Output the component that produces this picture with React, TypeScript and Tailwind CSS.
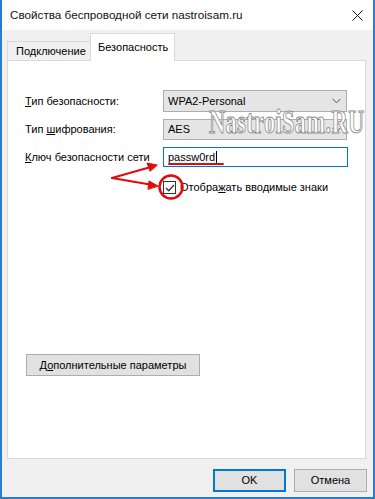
import React from 'react';

function Chevron() {
    return (
        <svg width="9" height="6" viewBox="0 0 9 6" className="text-[#555]">
            <path d="M0.5 0.8 L4.5 4.8 L8.5 0.8" fill="none" stroke="currentColor" strokeWidth="1" />
        </svg>
    );
}

function Combo(props: { value: string; h: string }) {
    return (
        <div className={`w-[184px] ${props.h} bg-[#e5e5e5] border border-[#adadad] flex items-center justify-between pl-[4px] pr-[5px]`}>
            <span>{props.value}</span>
            <Chevron />
        </div>
    );
}

function Row(props: { label: React.ReactNode; children: React.ReactNode; className?: string }) {
    return (
        <div className={`flex items-center ${props.className || ''}`}>
            <div className="w-[138px] whitespace-nowrap">{props.label}</div>
            {props.children}
        </div>
    );
}

function Annotations() {
    return (
        <svg className="absolute left-0 top-0 pointer-events-none" width="375" height="499" viewBox="0 0 375 499">
            <g stroke="#e10b0b" fill="#e10b0b" strokeLinecap="round">
                <line x1="94" y1="56" x2="172" y2="56" strokeWidth="2" />
                <line x1="167" y1="164" x2="221" y2="164" strokeWidth="2" />
                <line x1="110" y1="178" x2="147" y2="167.5" strokeWidth="2" />
                <polygon points="155,165 145,163 148,171" strokeWidth="1" />
                <line x1="110" y1="178" x2="148" y2="184.5" strokeWidth="2" />
                <polygon points="156,186 147,181 146,189" strokeWidth="1" />
                <circle cx="169" cy="187" r="11.5" fill="none" strokeWidth="2.5" />
            </g>
        </svg>
    );
}

export default function App() {
    return (
        <div className="relative w-[375px] h-[499px] flex flex-col bg-[#f0f0f0] border-x-2 border-b-2 border-[#2b7bd0] font-['Liberation_Sans',Arial,sans-serif] text-[11px] leading-none text-black">
            <div className="h-[30px] shrink-0 bg-white flex items-center justify-between pl-[8px] pr-[10px]">
                <span className="text-[11.7px] text-[#111]">Свойства беспроводной сети nastroisam.ru</span>
                <svg width="11" height="11" viewBox="0 0 11 11">
                    <path d="M0.5 0.5 L10.5 10.5 M10.5 0.5 L0.5 10.5" stroke="#111" strokeWidth="1" />
                </svg>
            </div>

            <div className="flex-1 flex flex-col pl-[5px] pr-[7px]">
                <div className="h-[30px] flex items-end">
                    <div className="h-[19px] w-[83px] border-t border-l border-[#d9d9d9] bg-[#f0f0f0] flex items-center pl-[8px]">
                        Подключение
                    </div>
                    <div className="relative z-10 -mb-px h-[28px] w-[85px] bg-white border border-b-0 border-[#d9d9d9] flex items-center pl-[7px]">
                        Безопасность
                    </div>
                </div>

                <div className="h-[399px] bg-white border border-[#d9d9d9] pl-[17px] pt-[29px] flex flex-col">
                    <Row label={<span><u>Т</u>ип безопасности:</span>}>
                        <Combo value="WPA2-Personal" h="h-[22px]" />
                    </Row>
                    <Row className="mt-[7px]" label={<span>Тип <u>ш</u>ифрования:</span>}>
                        <Combo value="AES" h="h-[21px]" />
                    </Row>
                    <Row className="mt-[7px]" label={<span><u>К</u>люч безопасности сети</span>}>
                        <div className="w-[185px] h-[20px] bg-white border border-[#0078d7] flex items-center pl-[4px]">
                            <span>passw0rd</span>
                            <span className="ml-[1px] w-px h-[13px] bg-black" />
                        </div>
                    </Row>
                    <div className="mt-[14px] ml-[138px] flex items-center h-[13px]">
                        <div className="w-[13px] h-[13px] border border-[#333] bg-white flex items-center justify-center">
                            <svg width="10" height="8" viewBox="0 0 10 8">
                                <path d="M1 4 L3.8 6.8 L9 1" fill="none" stroke="#333" strokeWidth="1.3" />
                            </svg>
                        </div>
                        <span className="ml-[4px]">Отобра<u>ж</u>ать вводимые знаки</span>
                    </div>
                    <div className="mt-[160px] ml-[1px] w-[174px] h-[22px] bg-[#e1e1e1] border border-[#adadad] flex items-center justify-center">
                        <span>Д<u>о</u>полнительные параметры</span>
                    </div>
                </div>

                <div className="mt-[10px] flex justify-end gap-[8px] -mr-[1px]">
                    <div className="w-[73px] h-[23px] bg-[#e1e1e1] border-2 border-[#0078d7] flex items-center justify-center">OK</div>
                    <div className="w-[73px] h-[23px] bg-[#e1e1e1] border border-[#adadad] flex items-center justify-center">Отмена</div>
                </div>
            </div>

            <div className="absolute left-[207px] top-[110px] pointer-events-none font-['Liberation_Serif',serif] font-bold text-[33px] leading-[24px] text-white origin-left scale-x-[0.68] [-webkit-text-stroke:1px_#8a8a8a] tracking-[0.5px]">
                NastroiSam.RU
            </div>

            <Annotations />
        </div>
    );
}
